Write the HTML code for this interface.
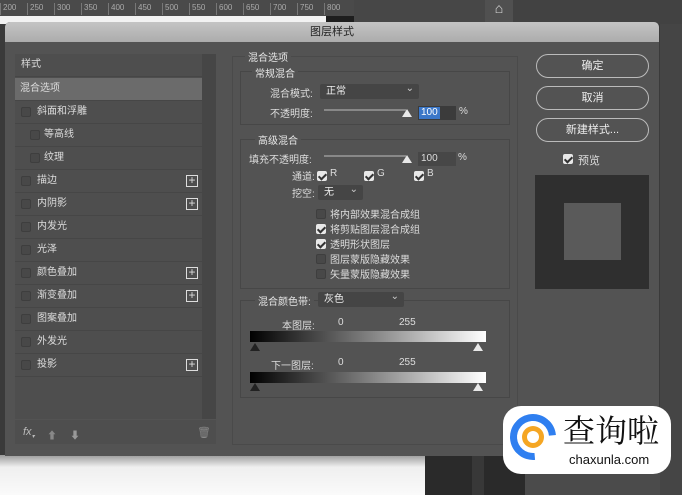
<!DOCTYPE html><html><head><meta charset="utf-8"><style>
*{margin:0;padding:0;box-sizing:border-box}
body{width:682px;height:495px;overflow:hidden;background:#3a3a3a;position:relative;font-family:"Liberation Sans","Noto Sans CJK SC",sans-serif;font-size:10px;color:#ddd}
.a{position:absolute}
.cb{position:absolute;width:10px;height:10px;border:1px solid #3e3e3e;background:#484848;border-radius:2px}
.ck{background:#e8e8e8;border-color:#e8e8e8}
.ck::after{content:"";position:absolute;left:2px;top:0px;width:3px;height:6px;border:solid #333;border-width:0 2px 2px 0;transform:rotate(45deg)}
.row{position:absolute;left:15px;width:187px;height:23px;border-bottom:1px solid #464646;line-height:22px}
.plus{position:absolute;right:4px;top:5px;width:12px;height:12px;border:1px solid #ddd;color:#ddd;font-size:12px;line-height:9px;text-align:center}
.btn{position:absolute;left:536px;width:113px;height:24px;border:1px solid #bbb;border-radius:12px;text-align:center;line-height:22px;color:#eee;font-size:11px}
.grp{position:absolute;border:1px solid #474747}
.lbl{position:absolute;background:#535353;padding:0 3px;font-size:10px;color:#e6e6e6}
.sel{position:absolute;background:#454545;border-radius:2px;height:15px;line-height:15px;padding-left:6px;color:#eee}
.sel::after{content:"⌄";position:absolute;right:5px;top:-3px;font-size:10px;color:#ccc}
.grad{position:absolute;left:250px;width:236px;height:11px;background:linear-gradient(90deg,#000,#fff)}
.tri{position:absolute;width:0;height:0;border-left:5px solid transparent;border-right:5px solid transparent;border-bottom:8px solid #e8e8e8}
.trd{border-bottom-color:#222}
.rl{display:inline-block;width:27px;border-left:1px solid #777;padding-left:2px;height:12px}
</style></head><body>
<div class="a" style="left:0;top:0;width:425px;height:16px;background:#4a4a4a;color:#aaa;font-size:8px;padding:3px 0 0 0;white-space:nowrap"><span class="rl">200</span><span class="rl">250</span><span class="rl">300</span><span class="rl">350</span><span class="rl">400</span><span class="rl">450</span><span class="rl">500</span><span class="rl">550</span><span class="rl">600</span><span class="rl">650</span><span class="rl">700</span><span class="rl">750</span><span class="rl">800</span></div>
<div class="a" style="left:0;top:16px;width:326px;height:8px;background:#f2f2f2"></div>
<div class="a" style="left:326px;top:16px;width:28px;height:8px;background:#1e1e1e"></div>
<div class="a" style="left:354px;top:16px;width:131px;height:8px;background:#474747"></div>
<div class="a" style="left:354px;top:0;width:131px;height:16px;background:#474747"></div>
<div class="a" style="left:485px;top:0;width:28px;height:24px;background:#505050;color:#ddd;font-size:14px;text-align:center">⌂</div>
<div class="a" style="left:513px;top:0;width:169px;height:24px;background:#424242"></div>
<div class="a" style="left:660px;top:24px;width:22px;height:471px;background:#454545"></div>
<div class="a" style="left:0;top:455px;width:425px;height:40px;background:linear-gradient(#9a9a9a,#efefef 30%,#fafafa)"></div>
<div class="a" style="left:425px;top:455px;width:100px;height:40px;background:#2a2a2a"></div>
<div class="a" style="left:472px;top:455px;width:12px;height:40px;background:#383838"></div>
<div class="a" style="left:525px;top:455px;width:135px;height:40px;background:#4b4b4b"></div>
<div class="a" style="left:5px;top:22px;width:654px;height:434px;background:#535353;border-radius:5px 5px 0 0"></div>
<div class="a" style="left:5px;top:22px;width:654px;height:20px;background:linear-gradient(#c4c4c4,#acacac);border-radius:5px 5px 0 0;text-align:center;line-height:20px;color:#222;font-size:11px">图层样式</div>
<div class="a" style="left:15px;top:54px;width:201px;height:365px;background:#4e4e4e"></div>
<div class="a" style="left:202px;top:54px;width:14px;height:365px;background:#464646"></div>
<div class="a" style="left:15px;top:420px;width:201px;height:24px;background:#4e4e4e"></div>
<div class="row" style="top:54px;padding-left:6px">样式</div>
<div class="row" style="top:78px;padding-left:5px;background:#6b6b6b">混合选项</div>
<div class="row" style="top:101px;padding-left:22px"><span class="cb" style="left:6px;top:6px"></span>斜面和浮雕</div>
<div class="row" style="top:124px;padding-left:29px"><span class="cb" style="left:15px;top:6px"></span>等高线</div>
<div class="row" style="top:147px;padding-left:29px"><span class="cb" style="left:15px;top:6px"></span>纹理</div>
<div class="row" style="top:170px;padding-left:22px"><span class="cb" style="left:6px;top:6px"></span>描边<span class="plus">+</span></div>
<div class="row" style="top:193px;padding-left:22px"><span class="cb" style="left:6px;top:6px"></span>内阴影<span class="plus">+</span></div>
<div class="row" style="top:216px;padding-left:22px"><span class="cb" style="left:6px;top:6px"></span>内发光</div>
<div class="row" style="top:239px;padding-left:22px"><span class="cb" style="left:6px;top:6px"></span>光泽</div>
<div class="row" style="top:262px;padding-left:22px"><span class="cb" style="left:6px;top:6px"></span>颜色叠加<span class="plus">+</span></div>
<div class="row" style="top:285px;padding-left:22px"><span class="cb" style="left:6px;top:6px"></span>渐变叠加<span class="plus">+</span></div>
<div class="row" style="top:308px;padding-left:22px"><span class="cb" style="left:6px;top:6px"></span>图案叠加</div>
<div class="row" style="top:331px;padding-left:22px"><span class="cb" style="left:6px;top:6px"></span>外发光</div>
<div class="row" style="top:354px;padding-left:22px"><span class="cb" style="left:6px;top:6px"></span>投影<span class="plus">+</span></div>
<div class="a" style="left:23px;top:426px;color:#bbb;font-style:italic;font-size:11px">fx<sub style="font-size:6px">▾</sub></div>
<div class="a" style="left:47px;top:427px;color:#888;font-size:10px">⬆</div>
<div class="a" style="left:70px;top:427px;color:#999;font-size:10px">⬇</div>
<div class="a" style="left:197px;top:426px;color:#888;font-size:11px">🗑</div>
<div class="grp" style="left:232px;top:56px;width:286px;height:389px;border-color:#4a4a4a"></div>
<div class="lbl" style="left:245px;top:49px">混合选项</div>
<div class="grp" style="left:240px;top:71px;width:270px;height:54px"></div>
<div class="lbl" style="left:252px;top:65px">常规混合</div>
<div class="a" style="left:270px;top:85px">混合模式:</div>
<div class="sel" style="left:320px;top:84px;width:99px">正常</div>
<div class="a" style="left:270px;top:105px">不透明度:</div>
<div class="a" style="left:324px;top:109px;width:82px;height:2px;background:#888"></div>
<div class="tri" style="left:402px;top:109px"></div>
<div class="a" style="left:418px;top:106px;width:38px;height:14px;background:#3b3b3b"></div>
<div class="a" style="left:419px;top:107px;height:12px;padding:0 2px;background:#3b77c8;color:#fff;line-height:12px">100</div>
<div class="a" style="left:459px;top:106px">%</div>
<div class="grp" style="left:240px;top:139px;width:270px;height:150px"></div>
<div class="lbl" style="left:255px;top:132px">高级混合</div>
<div class="a" style="left:249px;top:151px">填充不透明度:</div>
<div class="a" style="left:324px;top:155px;width:82px;height:2px;background:#888"></div>
<div class="tri" style="left:402px;top:155px"></div>
<div class="a" style="left:418px;top:152px;width:38px;height:14px;background:#474747;padding-left:3px;line-height:14px">100</div>
<div class="a" style="left:458px;top:152px">%</div>
<div class="a" style="left:292px;top:168px">通道:</div>
<span class="cb ck" style="left:317px;top:171px"></span><div class="a" style="left:330px;top:168px">R</div>
<span class="cb ck" style="left:364px;top:171px"></span><div class="a" style="left:377px;top:168px">G</div>
<span class="cb ck" style="left:414px;top:171px"></span><div class="a" style="left:427px;top:168px">B</div>
<div class="a" style="left:292px;top:185px">挖空:</div>
<div class="sel" style="left:318px;top:185px;width:45px">无</div>
<span class="cb" style="left:316px;top:209px"></span><div class="a" style="left:330px;top:206px">将内部效果混合成组</div>
<span class="cb ck" style="left:316px;top:224px"></span><div class="a" style="left:330px;top:221px">将剪贴图层混合成组</div>
<span class="cb ck" style="left:316px;top:239px"></span><div class="a" style="left:330px;top:236px">透明形状图层</div>
<span class="cb" style="left:316px;top:254px"></span><div class="a" style="left:330px;top:251px">图层蒙版隐藏效果</div>
<span class="cb" style="left:316px;top:269px"></span><div class="a" style="left:330px;top:266px">矢量蒙版隐藏效果</div>
<div class="grp" style="left:240px;top:300px;width:270px;height:98px"></div>
<div class="lbl" style="left:255px;top:293px">混合颜色带:</div>
<div class="sel" style="left:318px;top:292px;width:86px">灰色</div>
<div class="a" style="left:282px;top:317px">本图层:</div><div class="a" style="left:338px;top:317px">0</div><div class="a" style="left:399px;top:317px">255</div>
<div class="grad" style="top:331px"></div>
<div class="tri trd" style="left:250px;top:343px"></div><div class="tri" style="left:473px;top:343px"></div>
<div class="a" style="left:271px;top:357px">下一图层:</div><div class="a" style="left:338px;top:357px">0</div><div class="a" style="left:399px;top:357px">255</div>
<div class="grad" style="top:372px"></div>
<div class="tri trd" style="left:250px;top:383px"></div><div class="tri" style="left:473px;top:383px"></div>
<div class="btn" style="top:54px">确定</div>
<div class="btn" style="top:86px">取消</div>
<div class="btn" style="top:118px">新建样式...</div>
<span class="cb ck" style="left:563px;top:154px"></span><div class="a" style="left:578px;top:152px;font-size:11px">预览</div>
<div class="a" style="left:535px;top:175px;width:114px;height:114px;background:#2f2f2f"></div>
<div class="a" style="left:564px;top:203px;width:57px;height:57px;background:#5a5a5a"></div>
<div class="a" style="left:503px;top:406px;width:168px;height:68px;background:#fff;border-radius:18px"></div>
<div class="a" style="left:510px;top:414px;width:46px;height:46px;border-radius:50%;border:7px solid #2f7ff0;border-right-color:transparent;transform:rotate(40deg)"></div>
<div class="a" style="left:522px;top:426px;width:22px;height:22px;border-radius:50%;background:#f5a623"></div>
<div class="a" style="left:527px;top:431px;width:12px;height:12px;border-radius:50%;background:#fff"></div>
<div class="a" style="left:563px;top:410px;font-size:32px;color:#111;font-family:'Noto Serif CJK SC',serif;line-height:38px">查询啦</div>
<div class="a" style="left:569px;top:452px;font-size:13px;color:#111">chaxunla.com</div>
</body></html>
